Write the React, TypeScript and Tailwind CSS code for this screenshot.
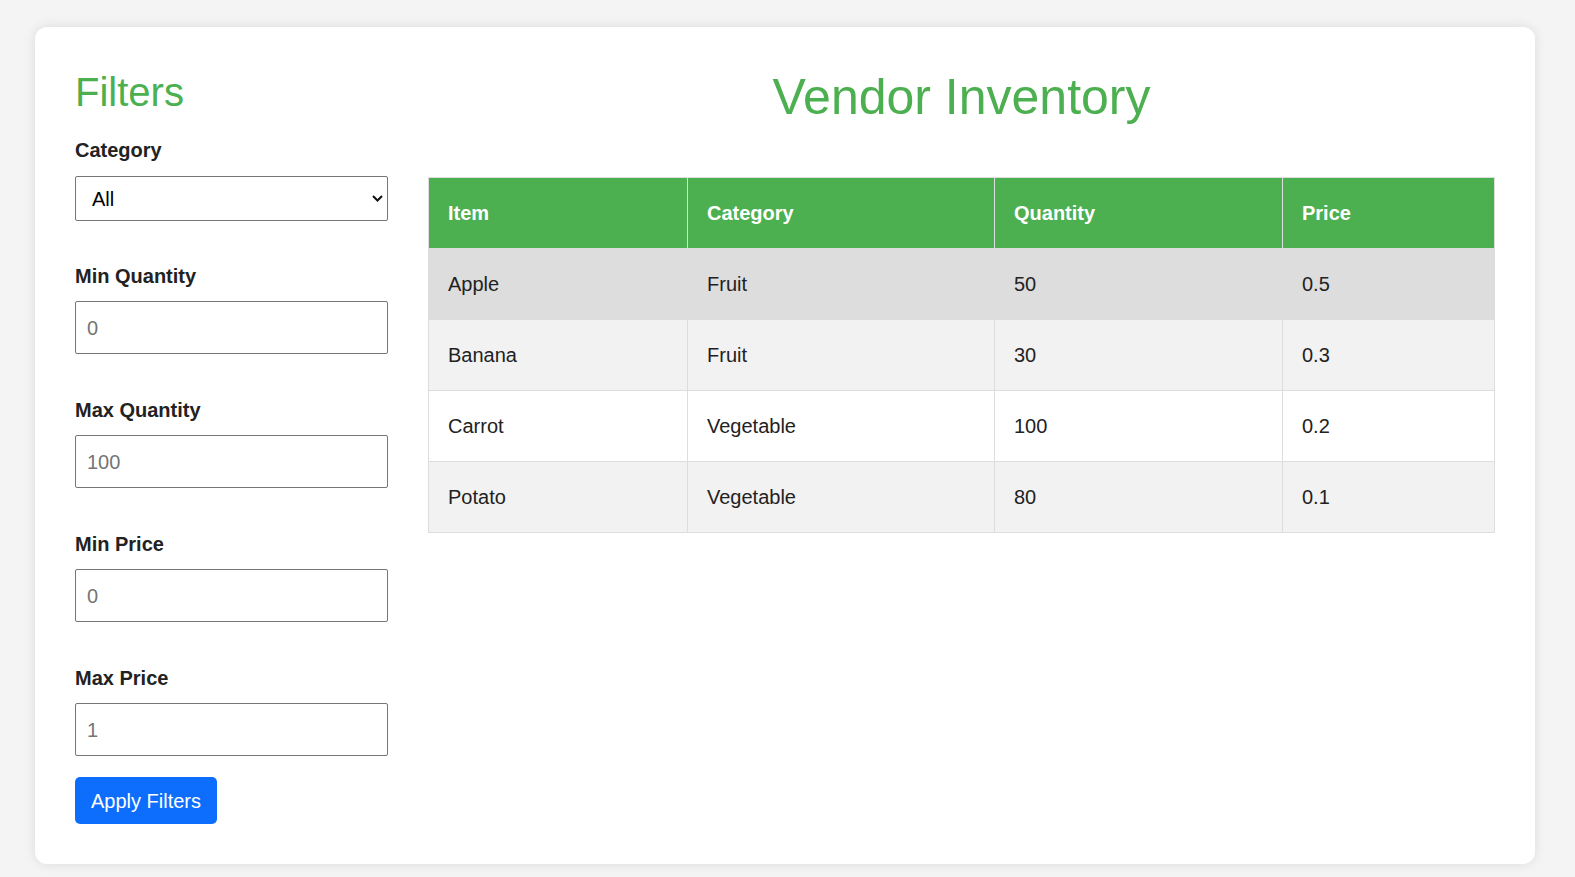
import { useState } from "react";

type Item = {
  name: string;
  category: string;
  quantity: number;
  price: number;
};

const items: Item[] = [
  { name: "Apple", category: "Fruit", quantity: 50, price: 0.5 },
  { name: "Banana", category: "Fruit", quantity: 30, price: 0.3 },
  { name: "Carrot", category: "Vegetable", quantity: 100, price: 0.2 },
  { name: "Potato", category: "Vegetable", quantity: 80, price: 0.1 },
];

const fields = [
  { label: "Min Quantity", placeholder: "0" },
  { label: "Max Quantity", placeholder: "100" },
  { label: "Min Price", placeholder: "0" },
  { label: "Max Price", placeholder: "1" },
];

export default function App() {
  const [category, setCategory] = useState("All");

  return (
    <div
      className="min-h-screen bg-[#f4f4f4] pt-[27px] pb-[14px]"
      style={{ fontFamily: '"Liberation Sans", Arial, sans-serif' }}
    >
      <div className="ml-[35px] w-[1500px] rounded-[12px] bg-white p-[40px] shadow-[0_0_12px_rgba(0,0,0,0.1)] flex gap-[40px]">
        {/* 필터 사이드바 */}
        <aside className="w-[313px] shrink-0 flex flex-col">
          <h2 className="pt-[2px] text-[40px] leading-[46px] text-[#4CAF50] font-normal">Filters</h2>

          <label className="mt-[24px] mb-[14px] text-[20px] leading-[23px] font-bold text-[#222]">
            Category
          </label>
          <div className="relative">
            <select
              value={category}
              onChange={(e) => setCategory(e.target.value)}
              className="w-full h-[45px] appearance-none rounded-[2px] border border-[#767676] bg-white pl-[16px] pr-[30px] text-[20px] text-black outline-none"
            >
              <option>All</option>
              <option>Fruit</option>
              <option>Vegetable</option>
            </select>
            <svg
              className="pointer-events-none absolute right-[5px] top-[19px]"
              width="11"
              height="7"
              viewBox="0 0 11 7"
              fill="none"
            >
              <path d="M1 1l4.5 4.5L10 1" stroke="#111" strokeWidth="2" />
            </svg>
          </div>

          {fields.map((f, i) => (
            <div key={f.label} className="flex flex-col">
              <label
                className={`${i === 0 ? "mt-[44px]" : "mt-[45px]"} mb-[13px] text-[20px] leading-[23px] font-bold text-[#222]`}
              >
                {f.label}
              </label>
              <input
                type="number"
                placeholder={f.placeholder}
                className="h-[53px] w-full rounded-[2px] border border-[#767676] bg-white px-[11px] pt-[1px] text-[20px] text-black outline-none placeholder:text-[#757575]"
              />
            </div>
          ))}

          <div className="mt-[21px]">
            <button
              type="button"
              className="rounded-[5px] bg-[#0d6efd] px-[16px] pt-[12.5px] pb-[11.5px] text-[20px] leading-[23px] text-white"
            >
              Apply Filters
            </button>
          </div>
        </aside>

        {/* 재고 테이블 */}
        <main className="flex-1 min-w-0">
          <h1 className="pt-[2px] text-center text-[50px] leading-[57px] text-[#4CAF50] font-normal mb-[51px]">
            Vendor Inventory
          </h1>
          <table className="w-full table-fixed border-collapse text-[20px] leading-[23px] text-[#222]">
            <colgroup>
              <col className="w-[259px]" />
              <col className="w-[307px]" />
              <col className="w-[288px]" />
              <col />
            </colgroup>
            <thead>
              <tr className="bg-[#4CAF50] text-white">
                {["Item", "Category", "Quantity", "Price"].map((h) => (
                  <th
                    key={h}
                    className="border border-[#ddd] px-[19px] pt-[24px] pb-[23px] text-left font-bold"
                  >
                    {h}
                  </th>
                ))}
              </tr>
            </thead>
            <tbody>
              {items.map((it, i) => (
                <tr
                  key={it.name}
                  className={i === 0 ? "bg-[#ddd]" : i % 2 === 1 ? "bg-[#f2f2f2]" : "bg-white"}
                >
                  <td className="border border-[#ddd] px-[19px] pt-[24px] pb-[23px]">{it.name}</td>
                  <td className="border border-[#ddd] px-[19px] pt-[24px] pb-[23px]">{it.category}</td>
                  <td className="border border-[#ddd] px-[19px] pt-[24px] pb-[23px]">{it.quantity}</td>
                  <td className="border border-[#ddd] px-[19px] pt-[24px] pb-[23px]">{it.price}</td>
                </tr>
              ))}
            </tbody>
          </table>
        </main>
      </div>
    </div>
  );
}
